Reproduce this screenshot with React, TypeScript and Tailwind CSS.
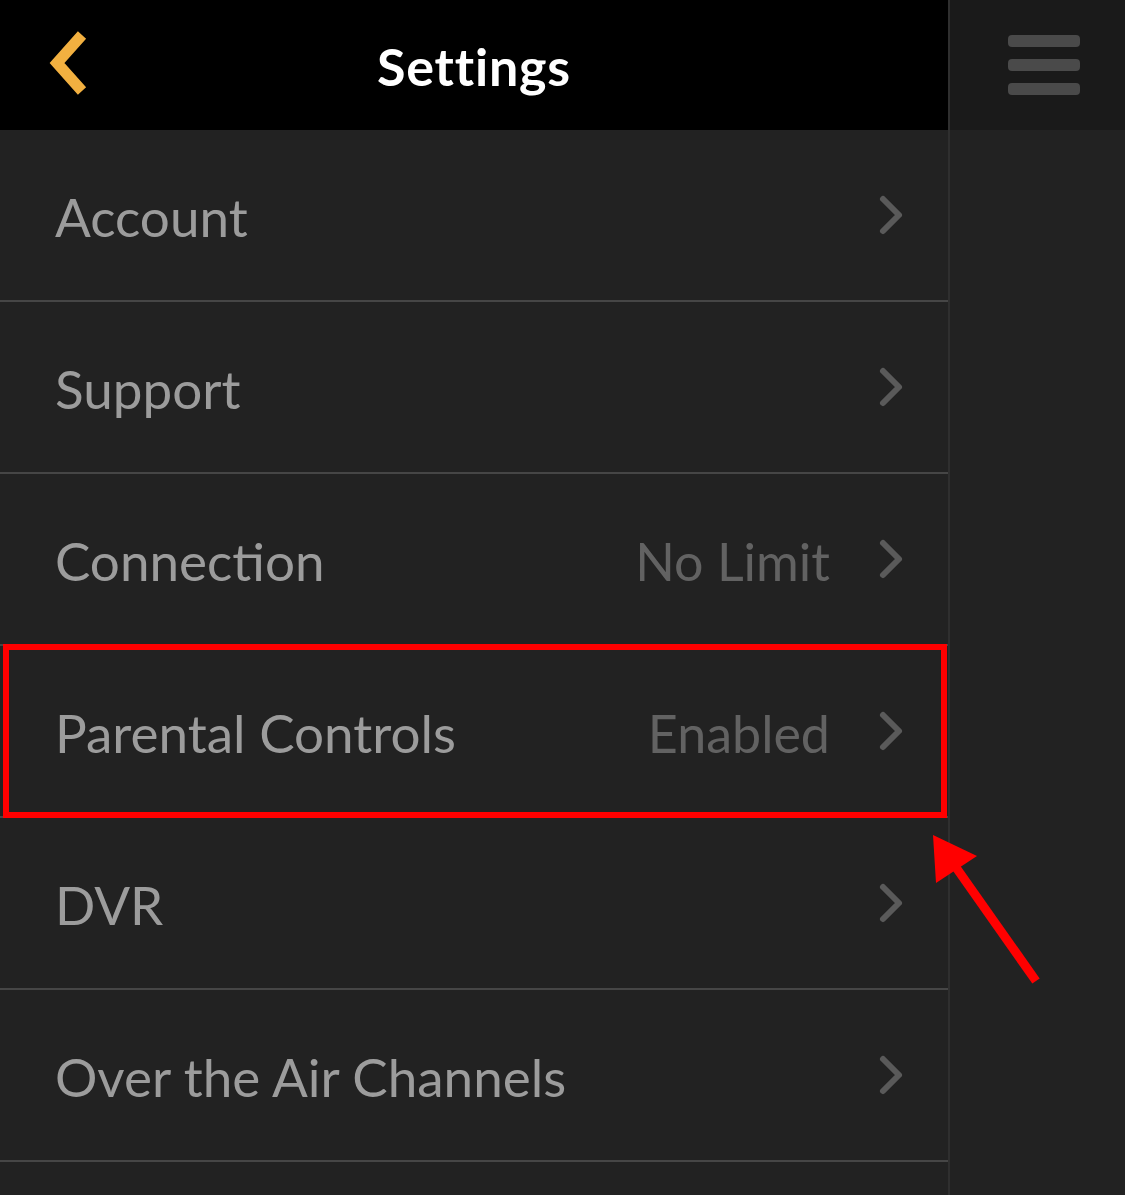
const rows = [
  { label: 'Account' },
  { label: 'Support' },
  { label: 'Connection', value: 'No Limit' },
  { label: 'Parental Controls', value: 'Enabled' },
  { label: 'DVR' },
  { label: 'Over the Air Channels' },
];

const Chevron = () => (
  <svg width="30" height="44" viewBox="0 0 30 44" className="shrink-0">
    <polyline points="5,6 21,22 5,38" fill="none" stroke="#5a5a5a" strokeWidth="6" strokeLinecap="round" strokeLinejoin="round" />
  </svg>
);

const App = () => {
  return (
    <div className="relative flex h-[1195px] w-[1125px] overflow-hidden bg-[#222222]" style={{ fontFamily: 'Lato, "Noto Sans", sans-serif' }}>
      {/* Main panel */}
      <div className="flex w-[948px] shrink-0 flex-col">
        <header className="relative flex h-[130px] items-center justify-center bg-black">
          <svg width="60" height="80" viewBox="0 0 60 80" className="absolute left-[40px] top-[24px]">
            <polyline points="42,11 17,39 42,67" fill="none" stroke="#f2b040" strokeWidth="11" strokeLinejoin="miter" />
          </svg>
          <h1 className="pt-[2px] text-[52px] font-bold tracking-[0.8px] text-white">Settings</h1>
        </header>

        {rows.map((row) => (
          <div key={row.label} className="flex h-[172px] items-center border-b-2 border-[#464646] pl-[55px] pr-[40px]">
            <span className="flex-1 pt-[4px] text-[53px] text-[#9c9c9c]">{row.label}</span>
            {row.value && <span className="mr-[48px] pt-[4px] text-[52px] text-[#626262]">{row.value}</span>}
            <Chevron />
          </div>
        ))}
      </div>

      <div className="w-[2px] shrink-0 bg-[#2f2f2f]" />

      {/* Side rail */}
      <div className="flex flex-1 flex-col">
        <div className="flex h-[130px] flex-col items-center justify-center gap-3 bg-[#1a1a1a] pl-[12px]">
          <span className="h-3 w-[72px] rounded bg-[#4a4a4a]" />
          <span className="h-3 w-[72px] rounded bg-[#4a4a4a]" />
          <span className="h-3 w-[72px] rounded bg-[#4a4a4a]" />
        </div>
      </div>

      {/* Annotation */}
      <div className="pointer-events-none absolute left-[3px] top-[644px] h-[174px] w-[944px] border-[6px] border-[#ff0000]" />
      <svg className="pointer-events-none absolute left-0 top-0" width="1125" height="1195">
        <line x1="1036" y1="981" x2="955" y2="866" stroke="#ff0000" strokeWidth="9" />
        <polygon points="933,835 977,856 936,883" fill="#ff0000" />
      </svg>
    </div>
  );
};

export default App;
